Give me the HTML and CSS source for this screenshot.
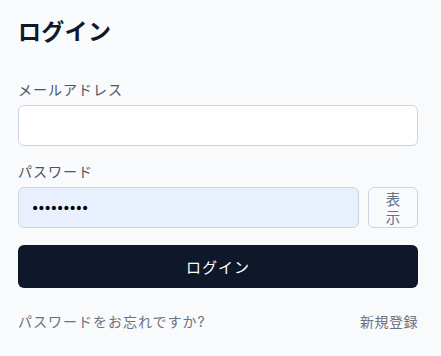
FILE: index.html
```html
<!DOCTYPE html>
<html lang="ja">
<head>
  <meta charset="UTF-8">
  <title>ログイン</title>
  <link rel="stylesheet" href="styles.css">
</head>
<body>
  <div class="login">
    <h1>ログイン</h1>

    <label for="email">メールアドレス</label>
    <input type="email" id="email" class="field">

    <label for="password">パスワード</label>
    <div class="pw-row">
      <input type="password" id="password" class="field pw" value="password1">
      <button type="button" class="toggle">表示</button>
    </div>

    <button type="submit" class="submit">ログイン</button>

    <div class="links">
      <a href="#">パスワードをお忘れですか?</a>
      <a href="#">新規登録</a>
    </div>
  </div>
</body>
</html>
```

FILE: styles.css
```css
body {
  margin: 0;
  background: #f8fafc;
  font-family: Inter, "Noto Sans CJK JP", sans-serif;
  color: #0f172a;
}

.login {
  padding: 16px 23px 0 18px;
}

h1 {
  font-size: 23px;
  font-weight: 700;
  margin: 0 0 32px;
  line-height: 32px;
  letter-spacing: 0.3px;
}

label {
  display: block;
  font-size: 14px;
  color: #4b5563;
  line-height: 20px;
  margin-bottom: 5px;
  letter-spacing: 1px;
}

.field {
  display: block;
  width: 100%;
  box-sizing: border-box;
  height: 41px;
  border: 1px solid #cbd5e1;
  border-radius: 6px;
  background: #fff;
  padding: 0 12px;
  font-size: 14px;
  margin-bottom: 16px;
}

.pw-row {
  display: flex;
  gap: 9px;
  margin-bottom: 17px;
}

.pw-row .field {
  margin-bottom: 0;
  flex: 1;
  background: #e8f0fe;
  font-family: "DejaVu Sans", sans-serif;
  letter-spacing: -2px;
  color: #000;
}

.toggle {
  width: 50px;
  height: 41px;
  box-sizing: border-box;
  padding: 0 11px;
  border: 1px solid #cbd5e1;
  border-radius: 6px;
  background: #f8fafc;
  color: #64748b;
  font-family: "Noto Sans CJK JP", sans-serif;
  font-size: 14.5px;
  line-height: 18px;
}

.submit {
  display: block;
  width: 100%;
  height: 43px;
  border: none;
  border-radius: 6px;
  background: #0f172a;
  color: #fff;
  font-family: "Noto Sans CJK JP", sans-serif;
  font-size: 15px;
  letter-spacing: 1px;
}

.links {
  display: flex;
  justify-content: space-between;
  margin-top: 24px;
  font-size: 14px;
  line-height: 20px;
}

.links a {
  color: #6b7280;
  text-decoration: none;
  letter-spacing: 1px;
}

.links a:last-child {
  letter-spacing: 0.5px;
}
```
